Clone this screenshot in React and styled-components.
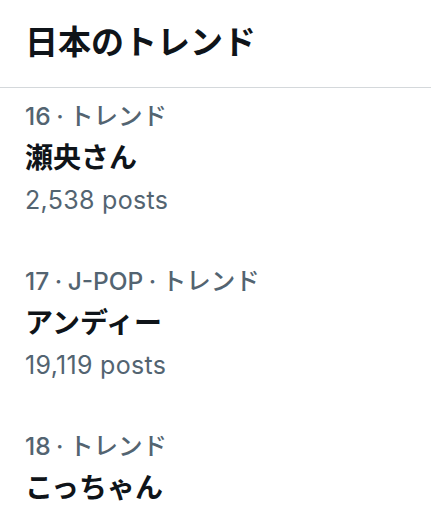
import React from "react";
import styled, { createGlobalStyle } from "styled-components";

const Global = createGlobalStyle`
  html, body { margin: 0; padding: 0; background: #ffffff; }
  body { font-family: Inter, "Noto Sans CJK JP", sans-serif; -webkit-font-smoothing: antialiased; }
`;

const Page = styled.div`
  width: 431px;
  min-height: 524px;
  background: #ffffff;
  overflow: hidden;
`;

const Header = styled.header`
  padding: 20px 25px 27px;
  border-bottom: 1px solid #d4d8db;
`;

const HeaderTitle = styled.h2`
  margin: 0;
  font-family: "Noto Sans CJK JP", sans-serif;
  font-size: 33px;
  line-height: 40px;
  font-weight: 700;
  color: #0f1419;
`;

const List = styled.div`
  display: flex;
  flex-direction: column;
`;

const Row = styled.div`
  display: flex;
  flex-direction: column;
  padding: 8px 25px 33px;
`;

const Meta = styled.div`
  font-family: Inter, "Noto Sans CJK JP", sans-serif;
  font-size: 24.5px;
  line-height: 40px;
  font-weight: 500;
  word-spacing: -1px;
  color: #536471;
  white-space: nowrap;
`;

const Title = styled.div`
  font-family: Inter, "Noto Sans CJK JP", sans-serif;
  font-size: 28px;
  line-height: 44px;
  font-weight: 700;
  color: #0f1419;
  white-space: nowrap;
`;

const Posts = styled.div`
  font-family: Inter, "Noto Sans CJK JP", sans-serif;
  font-size: 25px;
  line-height: 40px;
  letter-spacing: 0.3px;
  color: #536471;
  white-space: nowrap;
`;

const trends = [
  { rank: 16, cats: ["トレンド"], name: "瀬央さん", posts: "2,538 posts" },
  { rank: 17, cats: ["J-POP", "トレンド"], name: "アンディー", posts: "19,119 posts" },
  { rank: 18, cats: ["トレンド"], name: "こっちゃん", posts: null },
];

export default function App() {
  return (
    <Page>
      <Global />
      <Header>
        <HeaderTitle>日本のトレンド</HeaderTitle>
      </Header>
      <List>
        {trends.map((t) => (
          <Row key={t.rank}>
            <Meta>{[String(t.rank), ...t.cats].join(" · ")}</Meta>
            <Title>{t.name}</Title>
            {t.posts && <Posts>{t.posts}</Posts>}
          </Row>
        ))}
      </List>
    </Page>
  );
}
